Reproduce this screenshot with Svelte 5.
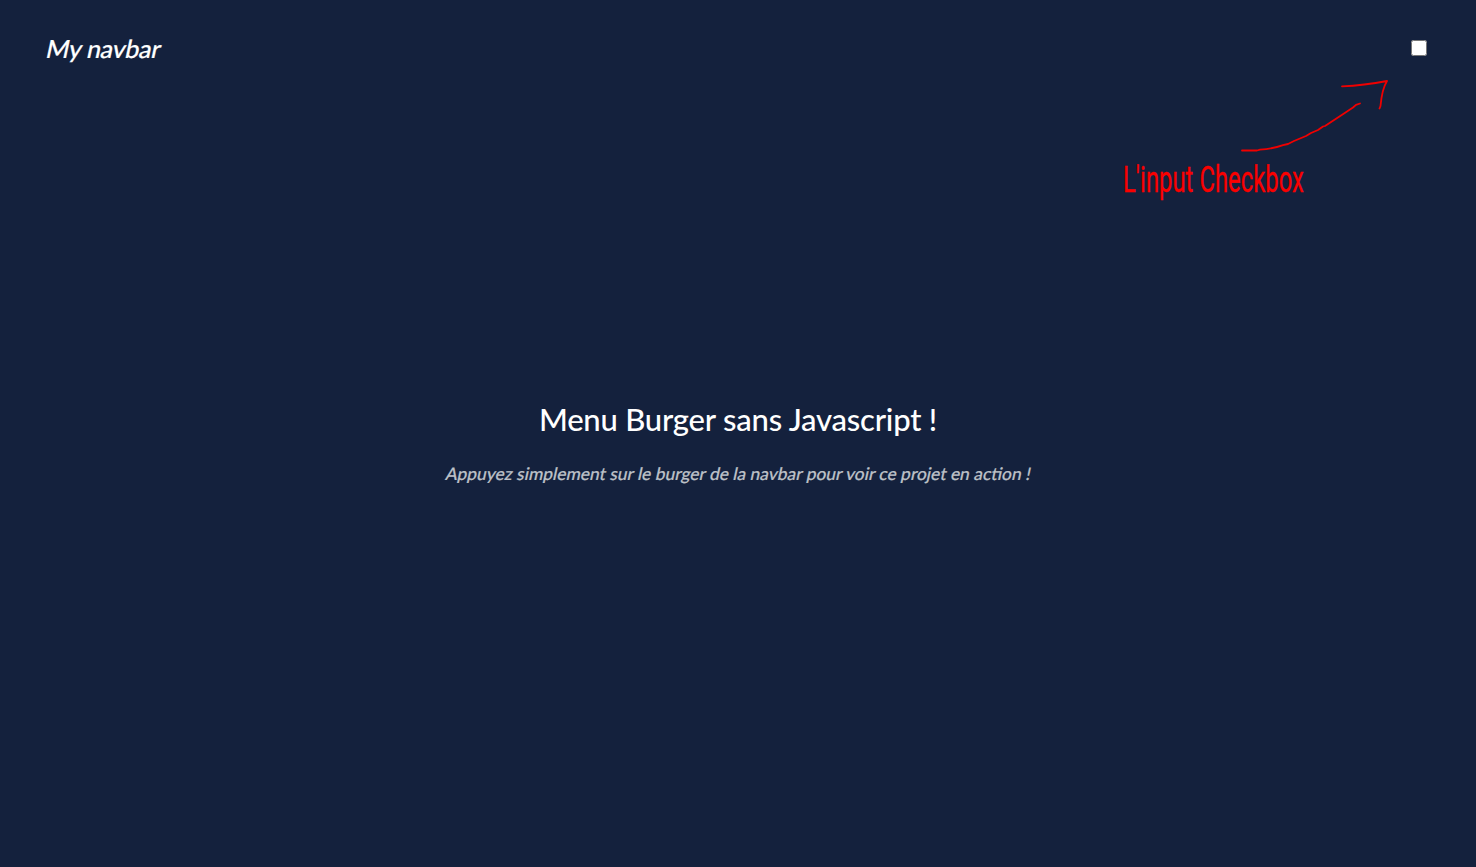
<script>
  let open = $state(false);
</script>

<div class="page">
  <nav>
    <span class="logo">My navbar</span>
    <input type="checkbox" bind:checked={open} aria-label="Menu" />
  </nav>
  <main>
    <h1>Menu Burger sans Javascript !</h1>
    <p>Appuyez simplement sur le burger de la navbar pour voir ce projet en action !</p>
  </main>
  <svg class="note" width="290" height="140" viewBox="1110 70 290 140">
    <g fill="none" stroke="#f00000" stroke-width="1.8" stroke-linecap="round" stroke-linejoin="round">
      <path d="M1242 150.5H1257L1260 149.7Q1274 148.5 1283 145.2L1288 144L1294 141L1306 136L1311 133L1318 130L1323 126.5L1325 126L1344 113.5L1353 107.5L1356 104.8L1360 103.5" />
      <path d="M1342 86.3Q1364 85.5 1387 81Q1382 89 1380.5 106L1379.5 108.5" />
    </g>
    <text transform="translate(1123 192) scale(.66 1)" textLength="274" lengthAdjust="spacing">L'input Checkbox</text>
  </svg>
</div>

<style>
  :global(body) {
    margin: 0;
    background: #14213d;
  }
  .page {
    position: relative;
    display: flex;
    flex-direction: column;
    height: 867px;
    overflow: hidden;
    background: #14213d;
    color: #fff;
    font-family: "Lato", sans-serif;
    font-weight: 500;
  }
  nav {
    display: flex;
    align-items: center;
    justify-content: space-between;
    height: 96px;
    padding: 0 48px 0 47px;
  }
  .logo {
    font-size: 25px;
    letter-spacing: -0.3px;
    transform: skewX(-12deg);
    -webkit-text-stroke: 0.2px currentColor;
  }
  input {
    width: 16px;
    height: 16px;
    margin: 0 1px 0 0;
  }
  main {
    flex: 1;
    display: flex;
    flex-direction: column;
    align-items: center;
    padding-top: 301px;
  }
  h1 {
    margin: 0;
    font-size: 31px;
    font-weight: 500;
    letter-spacing: -0.2px;
    line-height: 44px;
    white-space: nowrap;
  }
  p {
    margin: 20px 0 0 2px;
    font-size: 17.4px;
    line-height: 26px;
    color: #bcc0c7;
    white-space: nowrap;
    transform: skewX(-12deg);
    -webkit-text-stroke: 0.2px currentColor;
  }
  .note {
    position: absolute;
    left: 1110px;
    top: 70px;
    overflow: visible;
    pointer-events: none;
  }
  text {
    font-family: "Roboto", sans-serif;
    font-size: 36px;
    font-weight: 400;
    fill: #fa0000;
    stroke: #fa0000;
    stroke-width: 0.3px;
  }
</style>
